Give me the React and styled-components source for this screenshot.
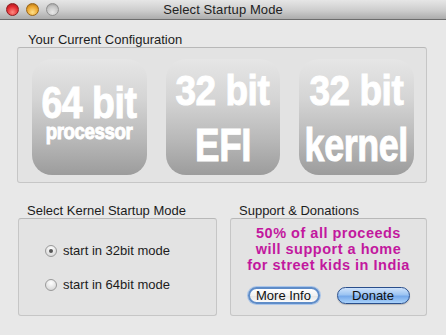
import React from 'react';
import styled, {createGlobalStyle} from 'styled-components';

const GlobalStyle = createGlobalStyle`
    html, body {
        margin: 0;
        padding: 0;
        background: #e8e8e8;
    }
    body {
        font-family: "Liberation Sans", Arial, sans-serif;
        color: #1a1a1a;
    }
`;

const Window = styled.div`
    width: 446px;
    height: 335px;
    background: #e8e8e8;
    overflow: hidden;
`;

const TitleBar = styled.div`
    display: grid;
    grid-template-columns: 1fr auto 1fr;
    align-items: center;
    height: 19px;
    padding: 0 6px;
    background: linear-gradient(#e6e6e6, #cdcdcd 55%, #acacac);
    border-bottom: 1px solid #6d6d6d;
`;

const Lights = styled.div`
    display: flex;
    gap: 7px;
`;

const Light = styled.span`
    width: 13px;
    height: 13px;
    border-radius: 50%;
    box-sizing: border-box;
    border: 1px solid ${props => props.rim};
    background: radial-gradient(circle at 50% 75%, ${props => props.glow} 0%, ${props => props.base} 60%, ${props => props.rim} 100%);
`;

const Title = styled.div`
    font-size: 13px;
    color: #222;
    letter-spacing: 0.1px;
`;

const Main = styled.div`
    padding: 0 19px 0 17px;
`;

const GroupLabel = styled.div`
    font-size: 13px;
    line-height: 14px;
    color: #1c1c1c;
    padding-left: ${props => props.indent || 9}px;
    margin-top: ${props => props.top}px;
`;

const GroupBox = styled.div`
    box-sizing: border-box;
    border: 1px solid #c6c6c6;
    border-top-color: #b8b8b8;
    border-radius: 3px;
    background: #e3e3e3;
    height: ${props => props.height}px;
`;

const ConfigBox = styled(GroupBox)`
    display: flex;
    gap: 19px;
    padding: 11px 12px 0 14px;
`;

const Tile = styled.div`
    width: 115px;
    height: 116px;
    border-radius: 20px;
    background: linear-gradient(#e6e6e6 0%, #d4d4d4 35%, #b8b8b8 70%, #9c9c9c 100%);
    display: flex;
    flex-direction: column;
    align-items: center;
    justify-content: center;
    color: #fff;
    font-weight: bold;
    padding-top: ${props => props.drop || 0}px;
    padding-bottom: ${props => props.lift || 0}px;
    box-sizing: border-box;
`;

const TileLine = styled.div`
    font-size: ${props => props.size}px;
    line-height: ${props => props.size}px;
    margin-top: ${props => props.gap || 0}px;
    transform: scaleX(${props => props.squeeze});
    white-space: nowrap;
    -webkit-text-stroke: 1px #fff;
    letter-spacing: -0.5px;
`;

const Row = styled.div`
    display: flex;
    gap: 13px;
    padding-left: 1px;
    margin-right: -1px;
`;

const Column = styled.div`
    width: ${props => props.width}px;
`;

const RadioBox = styled(GroupBox)`
    display: flex;
    flex-direction: column;
    gap: 20px;
    padding: 25px 0 0 26px;
`;

const RadioRow = styled.label`
    display: flex;
    align-items: center;
    gap: 6px;
    font-size: 13px;
    line-height: 14px;
    color: #1c1c1c;
`;

const RadioDot = styled.span`
    width: 12px;
    height: 12px;
    box-sizing: border-box;
    border-radius: 50%;
    border: 1px solid #9a9a9a;
    background: radial-gradient(circle at 50% 30%, #ffffff, #e2e2e2 60%, #cfcfcf);
    display: flex;
    align-items: center;
    justify-content: center;

    &::after {
        content: '';
        width: 4px;
        height: 4px;
        border-radius: 50%;
        background: ${props => props.checked ? '#555' : 'transparent'};
    }
`;

const SupportBox = styled(GroupBox)`
    display: flex;
    flex-direction: column;
    align-items: center;
    padding-top: 6px;
`;

const Pitch = styled.div`
    color: #c2189e;
    font-weight: bold;
    font-size: 14.5px;
    line-height: 16px;
    text-align: center;
    letter-spacing: 0.5px;
    white-space: nowrap;
`;

const Buttons = styled.div`
    display: flex;
    gap: 17px;
    margin-top: 14px;
`;

const Button = styled.button`
    box-sizing: border-box;
    height: 17px;
    width: ${props => props.width}px;
    border-radius: 9px;
    font-family: "Liberation Sans", Arial, sans-serif;
    font-size: 13px;
    line-height: 13px;
    padding: 0;
    color: #111;
    border: ${props => props.primary ? '1px solid #2a4f8c' : '2px solid #5e8cc8'};
    background: ${props => props.primary
        ? 'linear-gradient(#cfe3fb 0%, #9cc4f2 45%, #76a9ea 55%, #a9d2fb 100%)'
        : 'linear-gradient(#ffffff, #f1f1f1 50%, #e6e6e6 55%, #fbfbfb)'};
    box-shadow: ${props => props.primary ? '0 1px 1px rgba(0,0,0,0.2)' : '0 0 0 1px #a9c5ea'};
`;

const App = () => (
    <Window>
        <GlobalStyle/>
        <TitleBar>
            <Lights>
                <Light base="#e0262c" glow="#ff8a80" rim="#8e1a1d"/>
                <Light base="#e9a229" glow="#ffe08a" rim="#9a6414"/>
                <Light base="#c4c4c4" glow="#e8e8e8" rim="#8f8f8f"/>
            </Lights>
            <Title>Select Startup Mode</Title>
            <span/>
        </TitleBar>
        <Main>
            <GroupLabel top={13} indent={11}>Your Current Configuration</GroupLabel>
            <ConfigBox height={136}>
                <Tile lift={10}>
                    <TileLine size={44} squeeze={0.85}>64 bit</TileLine>
                    <TileLine size={22} gap={-4} squeeze={0.85}>processor</TileLine>
                </Tile>
                <Tile drop={4}>
                    <TileLine size={42} squeeze={0.88}>32 bit</TileLine>
                    <TileLine size={46} gap={10} squeeze={0.8}>EFI</TileLine>
                </Tile>
                <Tile drop={4}>
                    <TileLine size={42} squeeze={0.88}>32 bit</TileLine>
                    <TileLine size={46} gap={10} squeeze={0.78}>kernel</TileLine>
                </Tile>
            </ConfigBox>
            <Row>
                <Column width={199}>
                    <GroupLabel top={21}>Select Kernel Startup Mode</GroupLabel>
                    <RadioBox height={98}>
                        <RadioRow><RadioDot checked/>start in 32bit mode</RadioRow>
                        <RadioRow><RadioDot/>start in 64bit mode</RadioRow>
                    </RadioBox>
                </Column>
                <Column width={197}>
                    <GroupLabel top={21}>Support &amp; Donations</GroupLabel>
                    <SupportBox height={98}>
                        <Pitch>
                            50% of all proceeds<br/>
                            will support a home<br/>
                            for street kids in India
                        </Pitch>
                        <Buttons>
                            <Button width={72}>More Info</Button>
                            <Button primary width={73}>Donate</Button>
                        </Buttons>
                    </SupportBox>
                </Column>
            </Row>
        </Main>
    </Window>
);

export default App;
